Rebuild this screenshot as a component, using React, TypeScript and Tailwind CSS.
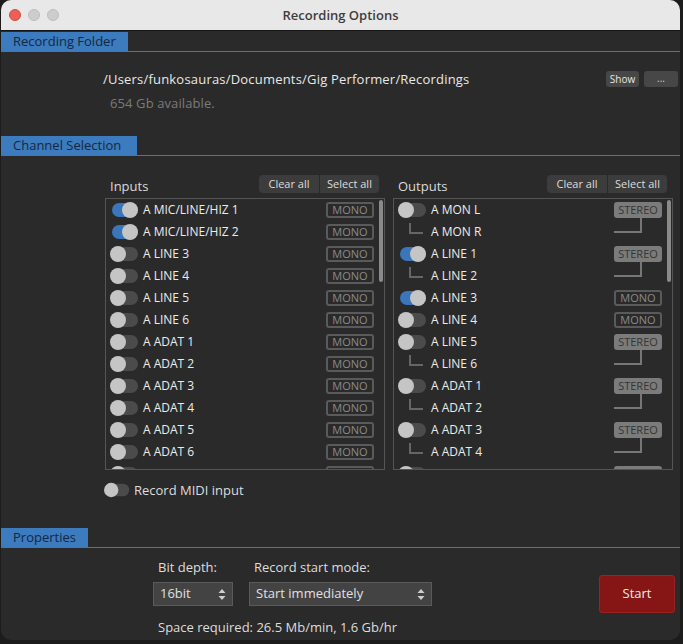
import React from 'react';

type Row = {
  name: string;
  on?: boolean;
  mode?: 'MONO' | 'STEREO';
  sub?: boolean;
  partial?: boolean;
};

const inputs: Row[] = [
  { name: 'A MIC/LINE/HIZ 1', on: true, mode: 'MONO' },
  { name: 'A MIC/LINE/HIZ 2', on: true, mode: 'MONO' },
  { name: 'A LINE 3', mode: 'MONO' },
  { name: 'A LINE 4', mode: 'MONO' },
  { name: 'A LINE 5', mode: 'MONO' },
  { name: 'A LINE 6', mode: 'MONO' },
  { name: 'A ADAT 1', mode: 'MONO' },
  { name: 'A ADAT 2', mode: 'MONO' },
  { name: 'A ADAT 3', mode: 'MONO' },
  { name: 'A ADAT 4', mode: 'MONO' },
  { name: 'A ADAT 5', mode: 'MONO' },
  { name: 'A ADAT 6', mode: 'MONO' },
  { name: '', mode: 'MONO', partial: true },
];

const outputs: Row[] = [
  { name: 'A MON L', mode: 'STEREO' },
  { name: 'A MON R', sub: true },
  { name: 'A LINE 1', on: true, mode: 'STEREO' },
  { name: 'A LINE 2', sub: true },
  { name: 'A LINE 3', on: true, mode: 'MONO' },
  { name: 'A LINE 4', mode: 'MONO' },
  { name: 'A LINE 5', mode: 'STEREO' },
  { name: 'A LINE 6', sub: true },
  { name: 'A ADAT 1', mode: 'STEREO' },
  { name: 'A ADAT 2', sub: true },
  { name: 'A ADAT 3', mode: 'STEREO' },
  { name: 'A ADAT 4', sub: true },
  { name: '', mode: 'STEREO', partial: true },
];

function Toggle({ on = false }: { on?: boolean }) {
  return (
    <div className="relative w-[28px] h-[16px] shrink-0">
      <div className={`absolute left-[2px] top-[1px] w-[26px] h-[14px] rounded-full ${on ? 'bg-[#3a76b9]' : 'bg-[#4b4b4b]'}`}></div>
      <div className={`absolute top-0 w-[16px] h-[16px] rounded-full bg-[#c5c5c5] ${on ? 'left-[12px]' : 'left-0'}`}></div>
    </div>
  );
}

function SectionTab({ title, width }: { title: string; width: string }) {
  return (
    <div className="border-b border-[#3d79b6]">
      <div className={`h-[19px] ${width} bg-[#3b7bbe] pl-[12px] text-[13px] leading-[19px] text-[#16283f]`}>{title}</div>
    </div>
  );
}

function ModeButton({ mode, blank }: { mode: 'MONO' | 'STEREO'; blank?: boolean }) {
  if (mode === 'STEREO') {
    return (
      <div className="w-[48px] h-[16px] rounded-[3px] bg-[#7b7b7b] text-[11px] leading-[16px] text-center text-[#353535]">{blank ? '' : 'STEREO'}</div>
    );
  }
  return (
    <div className="w-[48px] h-[16px] rounded-[3px] border-2 border-[#5a5a5a] text-[11px] leading-[12px] text-center text-[#8a8a8a]">{blank ? '' : 'MONO'}</div>
  );
}

function ChannelList({ title, rows }: { title: string; rows: Row[] }) {
  return (
    <div className="w-[280px] flex flex-col">
      <div className="h-[18px] flex items-center pl-[5px] pr-[6px]">
        <span className="text-[13px] leading-[16px] text-[#dadada] mt-[4px]">{title}</span>
        <div className="ml-auto flex h-[18px] rounded-[4px] bg-[#3c3c3c] text-[11px] leading-[18px] text-[#dddddd]">
          <div className="w-[61px] text-center border-r border-[#2a2a2a]">Clear all</div>
          <div className="w-[59px] text-center">Select all</div>
        </div>
      </div>
      <div className="relative mt-[5px] h-[272px] border border-[#555555] overflow-hidden">
        {rows.map((r, i) => (
          <div key={i} className="h-[22px] flex items-center pl-[4px] pr-[10px]">
            {r.sub ? (
              <div className="w-[28px] h-full shrink-0">
                <div className="ml-[11px] mt-[2px] w-[14px] h-[11px] border-l-2 border-b-2 border-[#666666]"></div>
              </div>
            ) : (
              <Toggle on={r.on} />
            )}
            <span className="ml-[5px] flex-1 text-[12px] leading-[16px] text-[#ececec]">{r.name}</span>
            {r.sub ? (
              <div className="w-[48px] h-full">
                <div className="-mt-[3px] w-[28px] h-[15px] border-r-2 border-b-2 border-[#777777]"></div>
              </div>
            ) : (
              r.mode && <ModeButton mode={r.mode} blank={r.partial} />
            )}
          </div>
        ))}
        <div className="absolute right-[1px] top-[1px] w-[4px] h-[82px] rounded-full bg-[#8a8a8a]"></div>
      </div>
    </div>
  );
}

function UpDown() {
  return (
    <svg width="8" height="13" viewBox="0 0 8 13" className="shrink-0">
      <path d="M4 1 L7.5 5 L0.5 5 Z" fill="#cfcfcf" />
      <path d="M4 12 L7.5 8 L0.5 8 Z" fill="#cfcfcf" />
    </svg>
  );
}

export default function App() {
  return (
    <div className="w-[683px] h-[644px] bg-[#1c1c1c] pl-[1px] overflow-hidden font-['Open_Sans',sans-serif]">
      <div className="w-[679px] h-[640px] rounded-[10px] overflow-hidden bg-[#2a2a2a] flex flex-col">
        {/* Title bar */}
        <div className="relative h-[31px] shrink-0 bg-[#e9e8e9] border-b border-[#161616] flex items-center">
          <div className="flex items-center gap-[7px] pl-[8px]">
            <div className="w-[12px] h-[12px] rounded-full bg-[#ec5f57] border border-[#d24c45]"></div>
            <div className="w-[12px] h-[12px] rounded-full bg-[#cdcdcd] border border-[#bdbdbd]"></div>
            <div className="w-[12px] h-[12px] rounded-full bg-[#cdcdcd] border border-[#bdbdbd]"></div>
          </div>
          <div className="absolute inset-0 flex items-center justify-center pt-[1px] text-[13px] font-semibold text-[#3d3d3d]">Recording Options</div>
        </div>

        {/* Recording folder */}
        <div className="mt-[1px]">
          <SectionTab title="Recording Folder" width="w-[127px]" />
        </div>
        <div className="mt-[19px] h-[16px] flex items-center pl-[102px] pr-[2px]">
          <span className="text-[13px] leading-[16px] tracking-[0.2px] text-[#e8e8e8]">/Users/funkosauras/Documents/Gig Performer/Recordings</span>
          <div className="ml-auto flex gap-[5px]">
            <div className="w-[33px] h-[16px] rounded-[3px] bg-[#474747] text-[10px] leading-[16px] text-center text-[#e6e6e6]">Show</div>
            <div className="w-[34px] h-[16px] rounded-[3px] bg-[#474747] text-[10px] leading-[14px] text-center text-[#cccccc]">...</div>
          </div>
        </div>
        <div className="mt-[8px] pl-[109px] text-[13px] leading-[16px] tracking-[0.1px] text-[#7a7a7a]">654 Gb available.</div>

        {/* Channel selection */}
        <div className="mt-[25px]">
          <SectionTab title="Channel Selection" width="w-[136px]" />
        </div>
        <div className="mt-[19px] flex gap-[8px] pl-[104px]">
          <ChannelList title="Inputs" rows={inputs} />
          <ChannelList title="Outputs" rows={outputs} />
        </div>
        <div className="mt-[12px] h-[16px] flex items-center pl-[103px]">
          <div className="w-[25px] scale-90 origin-left">
            <Toggle />
          </div>
          <span className="ml-[5px] text-[13px] leading-[16px] text-[#dddddd]">Record MIDI input</span>
        </div>

        {/* Properties */}
        <div className="mt-[30px]">
          <SectionTab title="Properties" width="w-[87px]" />
        </div>
        <div className="flex pl-[152px] pr-[5px]">
          <div className="flex flex-col">
            <div className="mt-[11px] flex gap-[16px] text-[13px] leading-[16px] text-[#dddddd]">
              <div className="w-[80px] pl-[5px]">Bit depth:</div>
              <div className="pl-[5px]">Record start mode:</div>
            </div>
            <div className="mt-[7px] flex gap-[16px]">
              <div className="w-[80px] h-[24px] bg-[#434343] border border-[#5a5a5a] flex items-center pl-[6px] pr-[6px] text-[13px] text-[#e0e0e0]">
                <span className="flex-1">16bit</span>
                <UpDown />
              </div>
              <div className="w-[183px] h-[24px] bg-[#434343] border border-[#5a5a5a] flex items-center pl-[6px] pr-[6px] text-[13px] text-[#e0e0e0]">
                <span className="flex-1">Start immediately</span>
                <UpDown />
              </div>
            </div>
            <div className="mt-[13px] pl-[5px] text-[13px] leading-[16px] text-[#dddddd]">Space required: 26.5 Mb/min, 1.6 Gb/hr</div>
          </div>
          <div className="ml-auto mt-[27px] w-[76px] h-[38px] rounded-[3px] bg-[#861515] border border-[#9b2222] flex items-center justify-center text-[13px] text-[#eeeeee]">Start</div>
        </div>
      </div>
    </div>
  );
}
